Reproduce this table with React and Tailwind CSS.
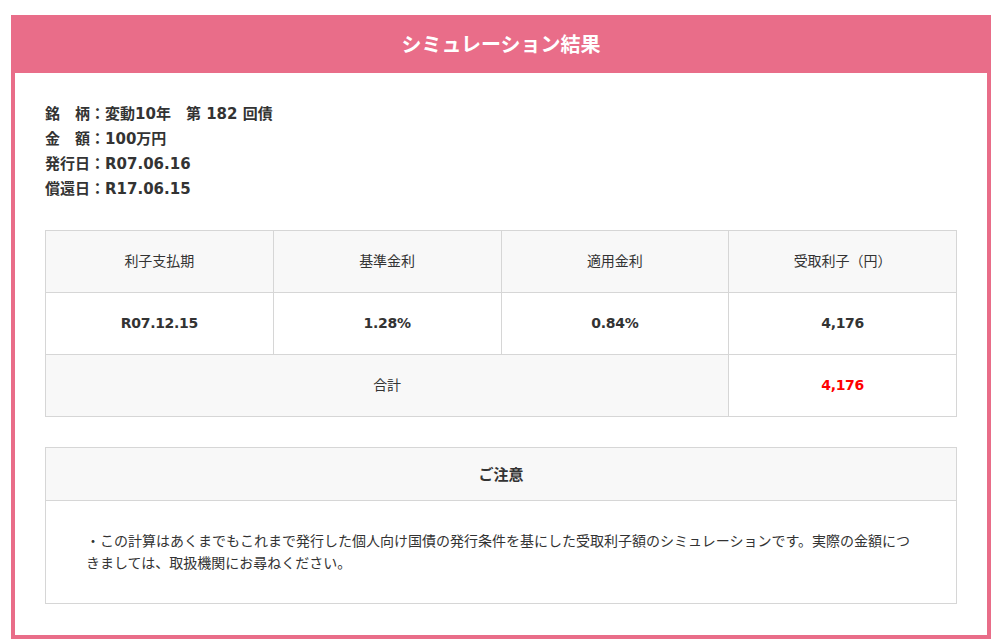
import React from "react";

const font = { fontFamily: '"DejaVu Sans", "Noto Sans CJK JP", "Noto Sans", sans-serif' };
const cjk = { fontFamily: '"Noto Sans CJK JP", sans-serif' };

function Line({ label, value }) {
  return (
    <div className="flex items-baseline h-[25px] whitespace-pre">
      <span style={cjk}>{label}：</span>
      <span>{value}</span>
    </div>
  );
}

export default function App() {
  const cell = "border border-[#d6d6d6] text-center align-middle h-[62px]";
  return (
    <div className="bg-white w-[991px] h-[640px] overflow-hidden pt-[15px] pl-[11px] text-[#333]" style={font}>
      <div className="w-[980px] border-4 border-t-0 border-[#e96d89] bg-white">
        <div className="bg-[#e96d89] h-[58px] -mx-[4px] flex items-center justify-center">
          <h1 className="text-white text-[20px] font-bold leading-none" style={cjk}>シミュレーション結果</h1>
        </div>
        <div className="px-[30px] pt-[27px] pb-[31px]">
          <div className="text-[15px] font-bold leading-[25px]">
            <Line label="銘　柄" value="変動10年　第 182 回債" />
            <Line label="金　額" value="100万円" />
            <Line label="発行日" value="R07.06.16" />
            <Line label="償還日" value="R17.06.15" />
          </div>
          <table className="mt-[30px] w-full table-fixed border-collapse">
            <tbody>
              <tr className="bg-[#f8f8f8] text-[14px]">
                <td className={cell}>利子支払期</td>
                <td className={cell}>基準金利</td>
                <td className={cell}>適用金利</td>
                <td className={cell}>受取利子（円）</td>
              </tr>
              <tr className="text-[14px] font-bold tracking-[-0.3px]">
                <td className={cell}>R07.12.15</td>
                <td className={cell}>1.28%</td>
                <td className={cell}>0.84%</td>
                <td className={cell}>4,176</td>
              </tr>
              <tr>
                <td colSpan={3} className={cell + " bg-[#f8f8f8] text-[14px]"}>合計</td>
                <td className={cell + " text-[14px] font-bold tracking-[-0.3px] text-[#ff0000]"}>4,176</td>
              </tr>
            </tbody>
          </table>
          <div className="mt-[30px] border border-[#d6d6d6]">
            <div className="bg-[#f8f8f8] h-[53px] flex items-center justify-center border-b border-[#d6d6d6] text-[15px] font-bold" style={cjk}>
              ご注意
            </div>
            <div className="px-[40px] pt-[28px] pb-[30px] text-[14px] leading-[22px]" style={cjk}>
              ・この計算はあくまでもこれまで発行した個人向け国債の発行条件を基にした受取利子額のシミュレーションです。実際の金額につきましては、取扱機関にお尋ねください。
            </div>
          </div>
        </div>
      </div>
    </div>
  );
}
